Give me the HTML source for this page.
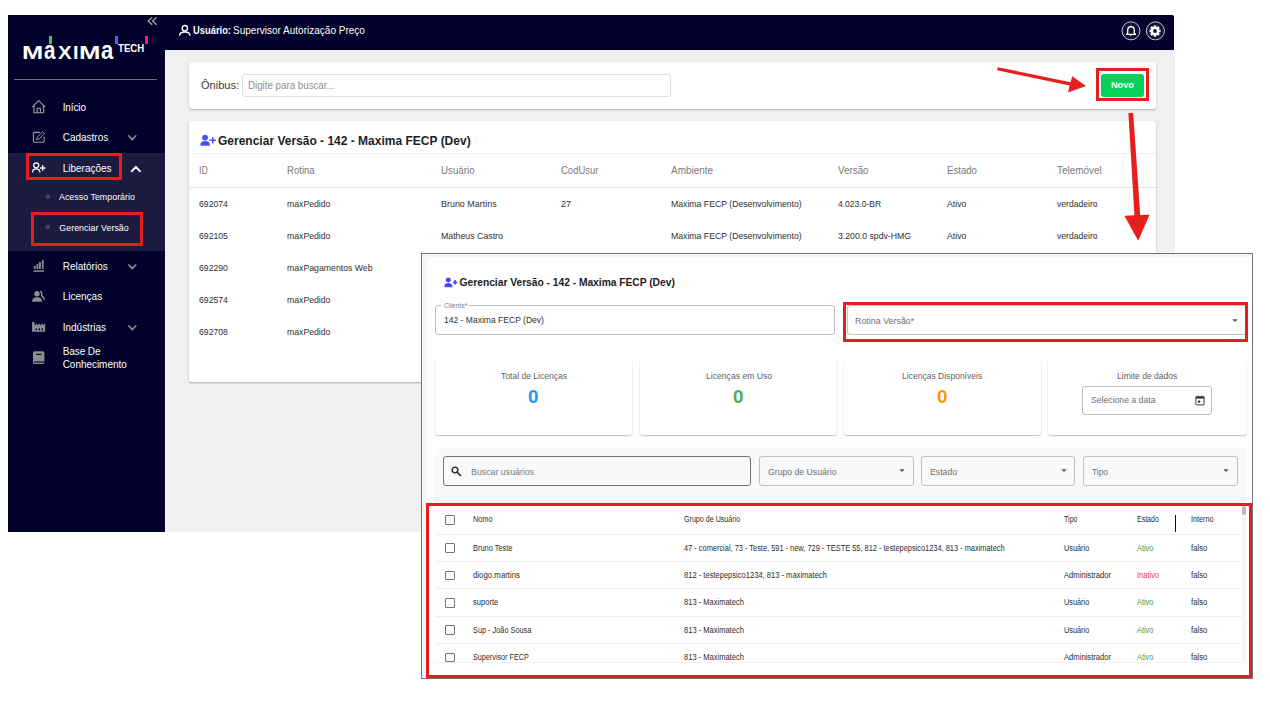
<!DOCTYPE html>
<html lang="pt-BR"><head><meta charset="utf-8"><title>Gerenciar Versão</title>
<style>
html,body{margin:0;padding:0;background:#fff;}
body{width:1270px;height:702px;position:relative;overflow:hidden;font-family:"Liberation Sans", sans-serif;}
#root{position:absolute;left:0;top:0;width:1270px;height:702px;overflow:hidden;}
#root div,#root span,#root svg{position:absolute;box-sizing:border-box;}
#root span{white-space:pre;}
</style></head><body><div id="root">
<div style="left:165px;top:50px;width:1010px;height:482px;background:#f0f0f0;"></div><div style="left:8px;top:15px;width:157px;height:517px;background:#01012b;"></div><div style="left:165px;top:15px;width:1009px;height:35px;background:#01012b;border-top-right-radius:2px;"></div><div style="left:8px;top:153px;width:157px;height:98px;background:#1b1b40;"></div><div style="left:165px;top:50px;width:1.2px;height:482px;background:#fbfbfb;"></div><span style="left:21.83px;top:44.00px;font-size:18.6px;line-height:18.6px;color:#fff;font-weight:700;transform-origin:0 0;transform:scaleX(1.3714);">M</span><span style="left:44.10px;top:38.00px;font-size:25.6px;line-height:25.6px;color:#fff;font-weight:700;transform-origin:0 0;transform:scaleX(0.8000);">a</span><span style="left:57.80px;top:44.00px;font-size:18.6px;line-height:18.6px;color:#fff;font-weight:700;transform-origin:0 0;transform:scaleX(1.1000);">X</span><span style="left:73.33px;top:44.00px;font-size:18.6px;line-height:18.6px;color:#fff;font-weight:700;transform-origin:0 0;transform:scaleX(1.0667);">I</span><span style="left:78.71px;top:44.00px;font-size:18.6px;line-height:18.6px;color:#fff;font-weight:700;transform-origin:0 0;transform:scaleX(1.3857);">M</span><span style="left:101.20px;top:38.00px;font-size:25.6px;line-height:25.6px;color:#fff;font-weight:700;transform-origin:0 0;transform:scaleX(0.8600);">a</span><span style="left:118.30px;top:44.00px;font-size:10.1px;line-height:10.1px;color:#fff;font-weight:700;transform-origin:0 0;transform:scaleX(0.9563) translateY(0.40px);">TECH</span><div style="left:49px;top:36.3px;width:2.8px;height:7.6px;background:#1fd655;"></div><div style="left:114.9px;top:36.3px;width:2.8px;height:7.6px;background:#5b5bff;"></div><div style="left:145.1px;top:36.3px;width:2.8px;height:7.6px;background:#ff0f9d;"></div><svg style="left:146px;top:15px;overflow:visible;" width="14" height="12" viewBox="0 0 14 12"><path d="M6.2 2.4 L2.2 6.1 L6.2 9.8 M10.6 2.4 L6.6 6.1 L10.6 9.8" fill="none" stroke="#b9b6b0" stroke-width="1.2" stroke-linecap="butt" stroke-linejoin="miter"/></svg><div style="left:14px;top:79px;width:143px;height:1px;background:#6f6f78;"></div><span style="left:62.70px;top:103.00px;font-size:10px;line-height:10px;color:#fff;letter-spacing:-0.108px;">Início</span><span style="left:62.70px;top:133.00px;font-size:10px;line-height:10px;color:#fff;">Cadastros</span><span style="left:62.70px;top:164.00px;font-size:10px;line-height:10px;color:#fff;">Liberações</span><span style="left:59.00px;top:193.00px;font-size:8.8px;line-height:8.8px;color:#fff;letter-spacing:0.050px;">Acesso Temporário</span><span style="left:59.30px;top:224.00px;font-size:8.8px;line-height:8.8px;color:#fff;letter-spacing:0.063px;">Gerenciar Versão</span><span style="left:62.70px;top:262.00px;font-size:10px;line-height:10px;color:#fff;">Relatórios</span><span style="left:62.70px;top:292.00px;font-size:10px;line-height:10px;color:#fff;">Licenças</span><span style="left:62.70px;top:323.00px;font-size:10px;line-height:10px;color:#fff;letter-spacing:-0.006px;">Indústrias</span><span style="left:62.70px;top:347.00px;font-size:10px;line-height:10px;color:#fff;letter-spacing:-0.082px;">Base De</span><span style="left:62.70px;top:360.00px;font-size:10px;line-height:10px;color:#fff;letter-spacing:-0.038px;">Conhecimento</span><svg style="left:44px;top:190px;overflow:visible;" width="8" height="42" viewBox="0 0 8 42"><circle cx="3.7" cy="6.7" r="1.5" fill="none" stroke="#77778c" stroke-width="0.9"/><circle cx="3.7" cy="37" r="1.5" fill="none" stroke="#77778c" stroke-width="0.9"/></svg><svg style="left:128px;top:135px;overflow:visible;" width="8.6" height="5.4" viewBox="0 0 8.6 5.4"><path d="M0.8 0.8 L4.3 4.6000000000000005 L7.8 0.8" fill="none" stroke="#8a8885" stroke-width="1.7" stroke-linecap="round" stroke-linejoin="round"/></svg><svg style="left:127.9px;top:263.5px;overflow:visible;" width="8.6" height="5.4" viewBox="0 0 8.6 5.4"><path d="M0.8 0.8 L4.3 4.6000000000000005 L7.8 0.8" fill="none" stroke="#8a8885" stroke-width="1.7" stroke-linecap="round" stroke-linejoin="round"/></svg><svg style="left:127.9px;top:324.6px;overflow:visible;" width="8.6" height="5.4" viewBox="0 0 8.6 5.4"><path d="M0.8 0.8 L4.3 4.6000000000000005 L7.8 0.8" fill="none" stroke="#8a8885" stroke-width="1.7" stroke-linecap="round" stroke-linejoin="round"/></svg><svg style="left:131.3px;top:165.9px;overflow:visible;" width="9.7" height="6" viewBox="0 0 9.7 6"><path d="M0.8 5.2 L4.85 0.8 L8.899999999999999 5.2" fill="none" stroke="#fff" stroke-width="2" stroke-linecap="round" stroke-linejoin="round"/></svg><svg style="left:30px;top:98px;overflow:visible;" width="18" height="17" viewBox="0 0 18 17"><path d="M2.6 8.7 L8.7 2.6 L14.9 8.7 M3.9 7.6 V14.7 H13.6 V7.6 M7.2 14.7 V10.2 H10.4 V14.7" fill="none" stroke="#a39e97" stroke-width="1.1" stroke-linejoin="round" stroke-linecap="round"/></svg><svg style="left:30px;top:129px;overflow:visible;" width="18" height="16" viewBox="0 0 18 16"><path d="M9.5 3.4 H4.6 Q3.4 3.4 3.4 4.6 V12 Q3.4 13.2 4.6 13.2 H13 Q14.2 13.2 14.2 12 V8" fill="none" stroke="#a39e97" stroke-width="1.1" stroke-linecap="round"/><path d="M6.6 10.4 L7.1 8.3 L12.6 2.9 L14.4 4.7 L8.9 10.1 Z" fill="none" stroke="#a39e97" stroke-width="1" stroke-linejoin="round"/></svg><svg style="left:30px;top:160px;overflow:visible;" width="18" height="15" viewBox="0 0 18 15"><circle cx="6.2" cy="5.3" r="2.5" fill="none" stroke="#fff" stroke-width="1.3"/><path d="M2.5 12.6 Q2.5 8.9 6.2 8.9 Q9.9 8.9 9.9 12.6" fill="none" stroke="#fff" stroke-width="1.3" stroke-linecap="butt"/><path d="M10 8 H15.4 M12.7 5.3 V10.7" stroke="#fff" stroke-width="1.4" fill="none"/></svg><svg style="left:30px;top:258px;overflow:visible;" width="18" height="16" viewBox="0 0 18 16"><g fill="#8e8e92"><rect x="3.8" y="8" width="1.9" height="2.9"/><rect x="6.5" y="6" width="1.7" height="4.9"/><rect x="8.9" y="4" width="2" height="6.9"/><rect x="11.9" y="1.9" width="1.7" height="9"/><rect x="3.4" y="12.3" width="10.6" height="1.5"/></g></svg><svg style="left:30px;top:289px;overflow:visible;" width="18" height="15" viewBox="0 0 18 15"><circle cx="7" cy="4.8" r="2.7" fill="#8e8e92"/><path d="M2.1 12.7 Q2.1 8.3 7 8.3 Q12 8.3 12 12.7 Z" fill="#8e8e92"/><path d="M10.2 2.1 Q12.6 3.6 11.6 6.6 Q14.2 8.2 14.3 11" fill="none" stroke="#8e8e92" stroke-width="1.4"/></svg><svg style="left:30px;top:320px;overflow:visible;" width="18" height="14" viewBox="0 0 18 14"><path d="M2.1 2 H4.5 V5.6 L7 3.2 V5.6 L9.8 3.2 V5.6 L12.6 3.2 V5.6 L15.2 3.2 V11.8 H2.1 Z" fill="#8e8e92"/><g fill="#01012b"><rect x="5.6" y="8.3" width="1.4" height="2"/><rect x="8.6" y="8.3" width="1.4" height="2"/><rect x="11.6" y="8.3" width="1.4" height="2"/></g></svg><svg style="left:30px;top:349px;overflow:visible;" width="18" height="17" viewBox="0 0 18 17"><rect x="3" y="2.2" width="11.4" height="12.8" rx="1.6" fill="#8e8e92"/><rect x="6.2" y="4.8" width="5.5" height="1.1" fill="#01012b"/><rect x="4.2" y="12.4" width="10.2" height="1.2" fill="#01012b"/></svg><div style="left:26.3px;top:153.2px;width:95.5px;height:26.6px;border:3px solid #e61e1e;"></div><div style="left:31.3px;top:212.3px;width:111.6px;height:33.3px;border:3px solid #e61e1e;"></div><svg style="left:177px;top:23px;overflow:visible;" width="16" height="15" viewBox="0 0 16 15"><circle cx="7.8" cy="5.2" r="2.7" fill="none" stroke="#fff" stroke-width="1.3"/><path d="M2.6 12.8 Q2.6 9 7.8 9 Q13 9 13 12.8" fill="none" stroke="#fff" stroke-width="1.3"/></svg><span style="left:192.50px;top:25.00px;font-size:10.7px;line-height:10.7px;color:#fff;font-weight:700;transform-origin:0 0;transform:scaleX(0.8764) translateY(0.20px);">Usuário:</span><span style="left:233.20px;top:25.00px;font-size:10.7px;line-height:10.7px;color:#fff;transform-origin:0 0;transform:scaleX(0.9368) translateY(0.20px);">Supervisor Autorização Preço</span><svg style="left:1120px;top:20px;overflow:visible;" width="48" height="22" viewBox="0 0 48 22"><circle cx="11" cy="10.85" r="9" fill="#111138" stroke="#c9c9d2" stroke-width="1"/><circle cx="35.4" cy="10.85" r="9" fill="#111138" stroke="#c9c9d2" stroke-width="1"/></svg><svg style="left:1125px;top:24.7px;overflow:visible;" width="12" height="12" viewBox="0 0 12 12"><path d="M1.6 9.4 H10.4 L9.3 7.9 V5.2 Q9.3 1.9 6 1.5 Q2.7 1.9 2.7 5.2 V7.9 Z" fill="none" stroke="#fff" stroke-width="1.35" stroke-linejoin="round"/><path d="M4.8 10.3 Q6 11.9 7.2 10.3 Z" fill="#fff"/></svg><svg style="left:1149.4px;top:24.85px;overflow:visible;" width="12" height="12" viewBox="0 0 12 12"><g transform="translate(6 6)"><rect x="-1.3" y="-5.6" width="2.6" height="3.2" fill="#fff" transform="rotate(0)"/><rect x="-1.3" y="-5.6" width="2.6" height="3.2" fill="#fff" transform="rotate(45)"/><rect x="-1.3" y="-5.6" width="2.6" height="3.2" fill="#fff" transform="rotate(90)"/><rect x="-1.3" y="-5.6" width="2.6" height="3.2" fill="#fff" transform="rotate(135)"/><rect x="-1.3" y="-5.6" width="2.6" height="3.2" fill="#fff" transform="rotate(180)"/><rect x="-1.3" y="-5.6" width="2.6" height="3.2" fill="#fff" transform="rotate(225)"/><rect x="-1.3" y="-5.6" width="2.6" height="3.2" fill="#fff" transform="rotate(270)"/><rect x="-1.3" y="-5.6" width="2.6" height="3.2" fill="#fff" transform="rotate(315)"/><circle r="4.1" fill="#fff"/><circle r="1.9" fill="#111138"/></g></svg><div style="left:189px;top:62px;width:967px;height:46.5px;background:#fff;border-radius:3px;box-shadow:0 1px 2px rgba(0,0,0,.28);"></div><span style="left:201.40px;top:80.00px;font-size:11.8px;line-height:11.8px;color:#3a3a3a;transform-origin:0 0;transform:scaleX(0.9362) translateY(0.20px);">Ônibus:</span><div style="left:242.2px;top:74px;width:429px;height:23px;background:#fff;border:1px solid #dddddd;border-radius:3px;"></div><span style="left:247.90px;top:80.00px;font-size:10.8px;line-height:10.8px;color:#8f8f8f;transform-origin:0 0;transform:scaleX(0.9019) translateY(-0.40px);">Digite para buscar...</span><div style="left:1100.8px;top:74.4px;width:43px;height:22.6px;background:#08d15b;border-radius:3px;"></div><span style="left:1111.00px;top:81.00px;font-size:8.6px;line-height:8.6px;color:#fff;font-weight:700;transform-origin:0 0;transform:scaleX(1.0643) translateY(-0.40px);">Novo</span><div style="left:1096px;top:68px;width:53px;height:32.5px;border:3px solid #e61e1e;"></div><div style="left:189px;top:121px;width:967px;height:260.5px;background:#fff;border-radius:2px;box-shadow:0 1px 2px rgba(0,0,0,.3);"></div><svg style="left:200px;top:134px;overflow:visible;" width="18.0" height="14.0" viewBox="0 0 18.0 14.0"><g transform="scale(1.0)"><circle cx="5.06" cy="3.6" r="2.9" fill="#4d4dff"/><path d="M0.4 11.2 Q0.4 7 5.06 7 Q9.8 7 9.8 11.2 Q9.8 11.8 9.2 11.8 H1 Q0.4 11.8 0.4 11.2 Z" fill="#4d4dff"/><path d="M9.55 6.3 H15.95 M12.75 3.0999999999999996 V9.5" stroke="#4d4dff" stroke-width="1.4" fill="none"/></g></svg><span style="left:217.90px;top:135.00px;font-size:12.5px;line-height:12.5px;color:#1d1d1f;font-weight:700;transform-origin:0 0;transform:scaleX(0.9603) translateY(0.15px);">Gerenciar Versão - 142 - Maxima FECP (Dev)</span><div style="left:189px;top:153px;width:967px;height:1px;background:#f1f1f1;"></div><div style="left:189px;top:187px;width:967px;height:1px;background:#e2e2e2;"></div><span style="left:199.00px;top:165.00px;font-size:10.5px;line-height:10.5px;color:#7a7a7a;transform-origin:0 0;transform:scaleX(0.8244) translateY(0.40px);">ID</span><span style="left:287.40px;top:165.00px;font-size:10.5px;line-height:10.5px;color:#7a7a7a;transform-origin:0 0;transform:scaleX(0.9111) translateY(0.40px);">Rotina</span><span style="left:441.30px;top:165.00px;font-size:10.5px;line-height:10.5px;color:#7a7a7a;transform-origin:0 0;transform:scaleX(0.9273) translateY(0.40px);">Usuário</span><span style="left:561.00px;top:165.00px;font-size:10.5px;line-height:10.5px;color:#7a7a7a;transform-origin:0 0;transform:scaleX(0.9038) translateY(0.40px);">CodUsur</span><span style="left:670.60px;top:165.00px;font-size:10.5px;line-height:10.5px;color:#7a7a7a;transform-origin:0 0;transform:scaleX(0.9479) translateY(0.40px);">Ambiente</span><span style="left:837.70px;top:165.00px;font-size:10.5px;line-height:10.5px;color:#7a7a7a;transform-origin:0 0;transform:scaleX(0.9346) translateY(0.40px);">Versão</span><span style="left:947.20px;top:165.00px;font-size:10.5px;line-height:10.5px;color:#7a7a7a;transform-origin:0 0;transform:scaleX(0.9163) translateY(0.40px);">Estado</span><span style="left:1056.70px;top:165.00px;font-size:10.5px;line-height:10.5px;color:#7a7a7a;transform-origin:0 0;transform:scaleX(0.9481) translateY(0.40px);">Telemóvel</span><span style="left:199.00px;top:199.00px;font-size:9.8px;line-height:9.8px;color:#2f2f2f;transform-origin:0 0;transform:scaleX(0.8844) translateY(-0.30px);">692074</span><span style="left:287.30px;top:199.00px;font-size:9.8px;line-height:9.8px;color:#2f2f2f;transform-origin:0 0;transform:scaleX(0.8857) translateY(-0.30px);">maxPedido</span><span style="left:441.30px;top:199.00px;font-size:9.8px;line-height:9.8px;color:#2f2f2f;transform-origin:0 0;transform:scaleX(0.9119) translateY(-0.30px);">Bruno Martins</span><span style="left:561.00px;top:199.00px;font-size:9.8px;line-height:9.8px;color:#2f2f2f;transform-origin:0 0;transform:scaleX(0.9188) translateY(-0.30px);">27</span><span style="left:670.60px;top:199.00px;font-size:9.8px;line-height:9.8px;color:#2f2f2f;transform-origin:0 0;transform:scaleX(0.8868) translateY(-0.30px);">Maxima FECP (Desenvolvimento)</span><span style="left:837.70px;top:199.00px;font-size:9.8px;line-height:9.8px;color:#2f2f2f;transform-origin:0 0;transform:scaleX(0.8690) translateY(-0.30px);">4.023.0-BR</span><span style="left:947.20px;top:199.00px;font-size:9.8px;line-height:9.8px;color:#2f2f2f;transform-origin:0 0;transform:scaleX(0.8911) translateY(-0.30px);">Ativo</span><span style="left:1056.70px;top:199.00px;font-size:9.8px;line-height:9.8px;color:#2f2f2f;transform-origin:0 0;transform:scaleX(0.8753) translateY(-0.30px);">verdadeiro</span><span style="left:199.00px;top:231.00px;font-size:9.8px;line-height:9.8px;color:#2f2f2f;transform-origin:0 0;transform:scaleX(0.8844) translateY(-0.30px);">692105</span><span style="left:287.30px;top:231.00px;font-size:9.8px;line-height:9.8px;color:#2f2f2f;transform-origin:0 0;transform:scaleX(0.8857) translateY(-0.30px);">maxPedido</span><span style="left:441.30px;top:231.00px;font-size:9.8px;line-height:9.8px;color:#2f2f2f;transform-origin:0 0;transform:scaleX(0.8952) translateY(-0.30px);">Matheus Castro</span><span style="left:670.60px;top:231.00px;font-size:9.8px;line-height:9.8px;color:#2f2f2f;transform-origin:0 0;transform:scaleX(0.8868) translateY(-0.30px);">Maxima FECP (Desenvolvimento)</span><span style="left:837.70px;top:231.00px;font-size:9.8px;line-height:9.8px;color:#2f2f2f;transform-origin:0 0;transform:scaleX(0.8885) translateY(-0.30px);">3.200.0 spdv-HMG</span><span style="left:947.20px;top:231.00px;font-size:9.8px;line-height:9.8px;color:#2f2f2f;transform-origin:0 0;transform:scaleX(0.8911) translateY(-0.30px);">Ativo</span><span style="left:1056.70px;top:231.00px;font-size:9.8px;line-height:9.8px;color:#2f2f2f;transform-origin:0 0;transform:scaleX(0.8753) translateY(-0.30px);">verdadeiro</span><span style="left:199.00px;top:263.00px;font-size:9.8px;line-height:9.8px;color:#2f2f2f;transform-origin:0 0;transform:scaleX(0.8844) translateY(-0.30px);">692290</span><span style="left:287.30px;top:263.00px;font-size:9.8px;line-height:9.8px;color:#2f2f2f;transform-origin:0 0;transform:scaleX(0.8888) translateY(-0.30px);">maxPagamentos Web</span><span style="left:199.00px;top:295.00px;font-size:9.8px;line-height:9.8px;color:#2f2f2f;transform-origin:0 0;transform:scaleX(0.8844) translateY(-0.30px);">692574</span><span style="left:287.30px;top:295.00px;font-size:9.8px;line-height:9.8px;color:#2f2f2f;transform-origin:0 0;transform:scaleX(0.8857) translateY(-0.30px);">maxPedido</span><span style="left:199.00px;top:327.00px;font-size:9.8px;line-height:9.8px;color:#2f2f2f;transform-origin:0 0;transform:scaleX(0.8844) translateY(-0.30px);">692708</span><span style="left:287.30px;top:327.00px;font-size:9.8px;line-height:9.8px;color:#2f2f2f;transform-origin:0 0;transform:scaleX(0.8857) translateY(-0.30px);">maxPedido</span><svg style="left:0px;top:0px;overflow:visible;pointer-events:none;" width="1270" height="702" viewBox="0 0 1270 702"><g fill="#e61e1e" stroke="none"><path d="M997.0 70.3 L997.9 67.2 L1070.6 82.3 L1072.2 76.2 L1086 86 L1068 92.4 L1069.6 85.6 Z"/><path d="M1128.4 113 L1133.2 113 L1140.2 215 L1149.6 214.7 L1138.2 240.7 L1124.4 215.7 L1134.4 215.3 Z"/></g></svg><div style="left:421px;top:253px;width:832px;height:426px;background:#f5f6fa;border:1px solid #737373;"></div><div style="left:426.5px;top:257.2px;width:825.5px;height:420.8px;background:#fff;border-top-left-radius:6px;"></div><svg style="left:444.3px;top:277.0px;overflow:visible;" width="15.48" height="12.04" viewBox="0 0 15.48 12.04"><g transform="scale(0.86)"><circle cx="5.06" cy="3.6" r="2.9" fill="#4747fb"/><path d="M0.4 11.2 Q0.4 7 5.06 7 Q9.8 7 9.8 11.2 Q9.8 11.8 9.2 11.8 H1 Q0.4 11.8 0.4 11.2 Z" fill="#4747fb"/><path d="M10.2 6.3 H15.600000000000001 M12.9 3.5999999999999996 V9.0" stroke="#4747fb" stroke-width="1.75" fill="none"/></g></svg><span style="left:459.60px;top:278.00px;font-size:10.3px;line-height:10.3px;color:#1d1d1f;font-weight:700;letter-spacing:-0.036px;">Gerenciar Versão - 142 - Maxima FECP (Dev)</span><div style="left:435px;top:305.4px;width:399.5px;height:29.7px;border:1px solid #bdbdbd;border-radius:3px;"></div><div style="left:441.1px;top:303px;width:28.4px;height:5px;background:#fff;"></div><span style="left:443.50px;top:302.00px;font-size:7px;line-height:7px;color:#7d7d7d;transform-origin:0 0;transform:scaleX(0.9601) translateY(0.20px);">Cliente*</span><span style="left:443.70px;top:315.00px;font-size:9.5px;line-height:9.5px;color:#2f2f2f;transform-origin:0 0;transform:scaleX(0.8982);">142 - Maxima FECP (Dev)</span><div style="left:847.3px;top:305.4px;width:399px;height:29.2px;border:1px solid #c4c4c4;border-right:none;border-radius:3px 0 0 3px;"></div><span style="left:855.30px;top:316.00px;font-size:9.4px;line-height:9.4px;color:#6f6f6f;transform-origin:0 0;transform:scaleX(0.9477) translateY(-0.20px);">Rotina Versão*</span><svg style="left:1231.7px;top:319.1px;overflow:visible;" width="6" height="3.2" viewBox="0 0 6 3.2"><path d="M0.3 0.2 H5.7 L3 3 Z" fill="#555"/></svg><div style="left:843.2px;top:302.1px;width:404.6px;height:39.9px;border:3px solid #e61e1e;"></div><div style="left:435px;top:358.5px;width:197.29999999999995px;height:76.5px;background:#fff;border-radius:3px;box-shadow:0 1px 1.5px rgba(0,0,0,.24), 0 0 1px rgba(0,0,0,.10);"></div><div style="left:639.6px;top:358.5px;width:197.39999999999998px;height:76.5px;background:#fff;border-radius:3px;box-shadow:0 1px 1.5px rgba(0,0,0,.24), 0 0 1px rgba(0,0,0,.10);"></div><div style="left:844px;top:358.5px;width:197.29999999999995px;height:76.5px;background:#fff;border-radius:3px;box-shadow:0 1px 1.5px rgba(0,0,0,.24), 0 0 1px rgba(0,0,0,.10);"></div><div style="left:1048.4px;top:358.5px;width:197.39999999999986px;height:76.5px;background:#fff;border-radius:3px;box-shadow:0 1px 1.5px rgba(0,0,0,.24), 0 0 1px rgba(0,0,0,.10);"></div><span style="left:500.80px;top:371.00px;font-size:9.5px;line-height:9.5px;color:#5f5f5f;transform-origin:0 0;transform:scaleX(0.8988);">Total de Licenças</span><span style="left:705.50px;top:371.00px;font-size:9.5px;line-height:9.5px;color:#5f5f5f;transform-origin:0 0;transform:scaleX(0.9066);">Licenças em Uso</span><span style="left:902.40px;top:371.00px;font-size:9.5px;line-height:9.5px;color:#5f5f5f;transform-origin:0 0;transform:scaleX(0.8984);">Licenças Disponíveis</span><span style="left:1116.90px;top:371.00px;font-size:9.5px;line-height:9.5px;color:#5f5f5f;transform-origin:0 0;transform:scaleX(0.9002);">Limite de dados</span><span style="left:528.40px;top:388.00px;font-size:18.4px;line-height:18.4px;color:#2196f3;font-weight:700;transform-origin:0 0;transform:scaleX(1.0200) translateY(0.40px);">0</span><span style="left:733.00px;top:388.00px;font-size:18.4px;line-height:18.4px;color:#4caf50;font-weight:700;transform-origin:0 0;transform:scaleX(1.0200) translateY(0.40px);">0</span><span style="left:937.00px;top:388.00px;font-size:18.4px;line-height:18.4px;color:#ff9800;font-weight:700;transform-origin:0 0;transform:scaleX(1.0200) translateY(0.40px);">0</span><div style="left:1082.3px;top:386px;width:130.2px;height:29px;border:1px solid #bdbdbd;border-radius:3px;background:#fff;"></div><span style="left:1090.60px;top:395.00px;font-size:9.5px;line-height:9.5px;color:#6f6f6f;transform-origin:0 0;transform:scaleX(0.9106) translateY(0.30px);">Selecione a data</span><svg style="left:1195.1px;top:394.6px;overflow:visible;" width="10" height="11" viewBox="0 0 10 11"><rect x="0.9" y="1.7" width="8.2" height="8.2" rx="0.4" fill="none" stroke="#3c3c3c" stroke-width="1"/><rect x="0.9" y="1.7" width="8.2" height="2" fill="#3c3c3c"/><rect x="2.5" y="0.6" width="1" height="1.6" fill="#3c3c3c"/><rect x="6.5" y="0.6" width="1" height="1.6" fill="#3c3c3c"/><rect x="2.9" y="5.5" width="2.3" height="2.3" fill="#3c3c3c"/></svg><div style="left:434.9px;top:447px;width:811.4px;height:60px;background:#f8f9fb;border-top-left-radius:6px;border-top-right-radius:6px;"></div><div style="left:443.2px;top:456px;width:307.6px;height:30px;border:1px solid #747474;border-radius:3px;"></div><svg style="left:450.5px;top:465.7px;overflow:visible;" width="11" height="11" viewBox="0 0 11 11"><circle cx="4" cy="4" r="2.9" fill="none" stroke="#222" stroke-width="1.4"/><path d="M6.2 6.2 L9.5 9.5" stroke="#222" stroke-width="1.6" stroke-linecap="round"/></svg><span style="left:470.70px;top:467.00px;font-size:9.5px;line-height:9.5px;color:#7a7a7a;transform-origin:0 0;transform:scaleX(0.9274) translateY(-0.40px);">Buscar usuários</span><div style="left:759.4px;top:456px;width:154.2px;height:30px;border:1px solid #c0c0c0;border-radius:3px;"></div><span style="left:768.00px;top:467.00px;font-size:9.5px;line-height:9.5px;color:#6f6f6f;transform-origin:0 0;transform:scaleX(0.9130) translateY(-0.40px);">Grupo de Usuário</span><svg style="left:899.3px;top:469.1px;overflow:visible;" width="6" height="3.2" viewBox="0 0 6 3.2"><path d="M0.3 0.2 H5.7 L3 3 Z" fill="#555"/></svg><div style="left:921.2px;top:456px;width:153.6px;height:30px;border:1px solid #c0c0c0;border-radius:3px;"></div><span style="left:929.80px;top:467.00px;font-size:9.5px;line-height:9.5px;color:#6f6f6f;transform-origin:0 0;transform:scaleX(0.9149) translateY(-0.40px);">Estado</span><svg style="left:1060.5px;top:469.1px;overflow:visible;" width="6" height="3.2" viewBox="0 0 6 3.2"><path d="M0.3 0.2 H5.7 L3 3 Z" fill="#555"/></svg><div style="left:1083.3px;top:456px;width:154.5px;height:30px;border:1px solid #c0c0c0;border-radius:3px;"></div><span style="left:1092.20px;top:467.00px;font-size:9.5px;line-height:9.5px;color:#6f6f6f;transform-origin:0 0;transform:scaleX(0.8854) translateY(-0.40px);">Tipo</span><svg style="left:1223.2px;top:469.1px;overflow:visible;" width="6" height="3.2" viewBox="0 0 6 3.2"><path d="M0.3 0.2 H5.7 L3 3 Z" fill="#555"/></svg><div style="left:428.8px;top:505.5px;width:820px;height:169.5px;background:#fff;"></div><div style="left:1241.8px;top:505.5px;width:4px;height:157px;background:#f6f6f6;"></div><div style="left:1241.9px;top:505.8px;width:4px;height:9.2px;background:#b9b9b9;border-radius:2px;"></div><span style="left:472.80px;top:515.00px;font-size:8.3px;line-height:8.3px;color:#2d2d2d;transform-origin:0 0;transform:scaleX(0.8838) translateY(0.30px);">Nomo</span><span style="left:683.80px;top:515.00px;font-size:8.3px;line-height:8.3px;color:#2d2d2d;transform-origin:0 0;transform:scaleX(0.8577) translateY(0.30px);">Grupo de Usuário</span><span style="left:1063.90px;top:515.00px;font-size:8.3px;line-height:8.3px;color:#2d2d2d;transform-origin:0 0;transform:scaleX(0.8571) translateY(0.30px);">Tipo</span><span style="left:1136.50px;top:515.00px;font-size:8.3px;line-height:8.3px;color:#2d2d2d;transform-origin:0 0;transform:scaleX(0.8430) translateY(0.30px);">Estado</span><span style="left:1191.40px;top:515.00px;font-size:8.3px;line-height:8.3px;color:#2d2d2d;transform-origin:0 0;transform:scaleX(0.8735) translateY(0.30px);">Interno</span><div style="left:1175px;top:514.9px;width:1px;height:17px;background:#111;"></div><div style="left:444.8px;top:515.2px;width:9.8px;height:9.8px;border:1px solid #747474;border-radius:1px;background:#fff;"></div><div style="left:435px;top:534px;width:806.6px;height:1px;background:#eeeeee;"></div><div style="left:444.8px;top:543.4000000000001px;width:9.8px;height:9.8px;border:1px solid #747474;border-radius:1px;background:#fff;"></div><span style="left:472.80px;top:544.00px;font-size:8.3px;line-height:8.3px;color:#2d2d2d;transform-origin:0 0;transform:scaleX(0.8934) translateY(-0.40px);">Bruno Teste</span><span style="left:683.80px;top:544.00px;font-size:8.3px;line-height:8.3px;color:#2d2d2d;transform-origin:0 0;transform:scaleX(0.8931) translateY(-0.40px);">47 - comercial, 73 - Teste, 591 - new, 729 - TESTE 55, 812 - testepepsico1234, 813 - maximatech</span><span style="left:1063.90px;top:544.00px;font-size:8.3px;line-height:8.3px;color:#2d2d2d;transform-origin:0 0;transform:scaleX(0.8835) translateY(-0.40px);">Usuário</span><span style="left:1136.50px;top:544.00px;font-size:8.3px;line-height:8.3px;color:#43a047;transform-origin:0 0;transform:scaleX(0.8815) translateY(-0.40px);">Ativo</span><span style="left:1191.40px;top:544.00px;font-size:8.3px;line-height:8.3px;color:#2d2d2d;transform-origin:0 0;transform:scaleX(0.9380) translateY(-0.40px);">falso</span><div style="left:435px;top:561px;width:806.6px;height:1px;background:#eeeeee;"></div><div style="left:444.8px;top:570.7px;width:9.8px;height:9.8px;border:1px solid #747474;border-radius:1px;background:#fff;"></div><span style="left:472.80px;top:571.00px;font-size:8.3px;line-height:8.3px;color:#2d2d2d;transform-origin:0 0;transform:scaleX(0.9445);">diogo.martins</span><span style="left:683.80px;top:571.00px;font-size:8.3px;line-height:8.3px;color:#2d2d2d;transform-origin:0 0;transform:scaleX(0.9110);">812 - testepepsico1234, 813 - maximatech</span><span style="left:1063.90px;top:571.00px;font-size:8.3px;line-height:8.3px;color:#2d2d2d;transform-origin:0 0;transform:scaleX(0.9199);">Administrador</span><span style="left:1136.50px;top:571.00px;font-size:8.3px;line-height:8.3px;color:#ef3a3a;transform-origin:0 0;transform:scaleX(0.9061);">Inativo</span><span style="left:1191.40px;top:571.00px;font-size:8.3px;line-height:8.3px;color:#2d2d2d;transform-origin:0 0;transform:scaleX(0.9380);">falso</span><div style="left:435px;top:588px;width:806.6px;height:1px;background:#eeeeee;"></div><div style="left:444.8px;top:598.0000000000001px;width:9.8px;height:9.8px;border:1px solid #747474;border-radius:1px;background:#fff;"></div><span style="left:472.80px;top:598.00px;font-size:8.3px;line-height:8.3px;color:#2d2d2d;transform-origin:0 0;transform:scaleX(0.9123) translateY(0.20px);">suporte</span><span style="left:683.80px;top:598.00px;font-size:8.3px;line-height:8.3px;color:#2d2d2d;transform-origin:0 0;transform:scaleX(0.9076) translateY(0.20px);">813 - Maximatech</span><span style="left:1063.90px;top:598.00px;font-size:8.3px;line-height:8.3px;color:#2d2d2d;transform-origin:0 0;transform:scaleX(0.8835) translateY(0.20px);">Usuário</span><span style="left:1136.50px;top:598.00px;font-size:8.3px;line-height:8.3px;color:#43a047;transform-origin:0 0;transform:scaleX(0.8815) translateY(0.20px);">Ativo</span><span style="left:1191.40px;top:598.00px;font-size:8.3px;line-height:8.3px;color:#2d2d2d;transform-origin:0 0;transform:scaleX(0.9380) translateY(0.20px);">falso</span><div style="left:435px;top:615.5px;width:806.6px;height:1px;background:#eeeeee;"></div><div style="left:444.8px;top:625.3000000000001px;width:9.8px;height:9.8px;border:1px solid #747474;border-radius:1px;background:#fff;"></div><span style="left:472.80px;top:625.00px;font-size:8.3px;line-height:8.3px;color:#2d2d2d;transform-origin:0 0;transform:scaleX(0.8848) translateY(0.50px);">Sup - João Sousa</span><span style="left:683.80px;top:625.00px;font-size:8.3px;line-height:8.3px;color:#2d2d2d;transform-origin:0 0;transform:scaleX(0.9076) translateY(0.50px);">813 - Maximatech</span><span style="left:1063.90px;top:625.00px;font-size:8.3px;line-height:8.3px;color:#2d2d2d;transform-origin:0 0;transform:scaleX(0.8835) translateY(0.50px);">Usuário</span><span style="left:1136.50px;top:625.00px;font-size:8.3px;line-height:8.3px;color:#43a047;transform-origin:0 0;transform:scaleX(0.8815) translateY(0.50px);">Ativo</span><span style="left:1191.40px;top:625.00px;font-size:8.3px;line-height:8.3px;color:#2d2d2d;transform-origin:0 0;transform:scaleX(0.9380) translateY(0.50px);">falso</span><div style="left:435px;top:643px;width:806.6px;height:1px;background:#eeeeee;"></div><div style="left:444.8px;top:652.6000000000001px;width:9.8px;height:9.8px;border:1px solid #747474;border-radius:1px;background:#fff;"></div><span style="left:472.80px;top:653.00px;font-size:8.3px;line-height:8.3px;color:#2d2d2d;transform-origin:0 0;transform:scaleX(0.8706) translateY(-0.20px);">Supervisor FECP</span><span style="left:683.80px;top:653.00px;font-size:8.3px;line-height:8.3px;color:#2d2d2d;transform-origin:0 0;transform:scaleX(0.9076) translateY(-0.20px);">813 - Maximatech</span><span style="left:1063.90px;top:653.00px;font-size:8.3px;line-height:8.3px;color:#2d2d2d;transform-origin:0 0;transform:scaleX(0.9199) translateY(-0.20px);">Administrador</span><span style="left:1136.50px;top:653.00px;font-size:8.3px;line-height:8.3px;color:#43a047;transform-origin:0 0;transform:scaleX(0.8815) translateY(-0.20px);">Ativo</span><span style="left:1191.40px;top:653.00px;font-size:8.3px;line-height:8.3px;color:#2d2d2d;transform-origin:0 0;transform:scaleX(0.9380) translateY(-0.20px);">falso</span><div style="left:428.8px;top:662px;width:820px;height:13px;background:#fff;"></div><div style="left:435px;top:662px;width:806.6px;height:1px;background:#f1f1f1;"></div><div style="left:426.4px;top:503px;width:825.6px;height:175px;border:3px solid #e61e1e;"></div>
</div></body></html>
